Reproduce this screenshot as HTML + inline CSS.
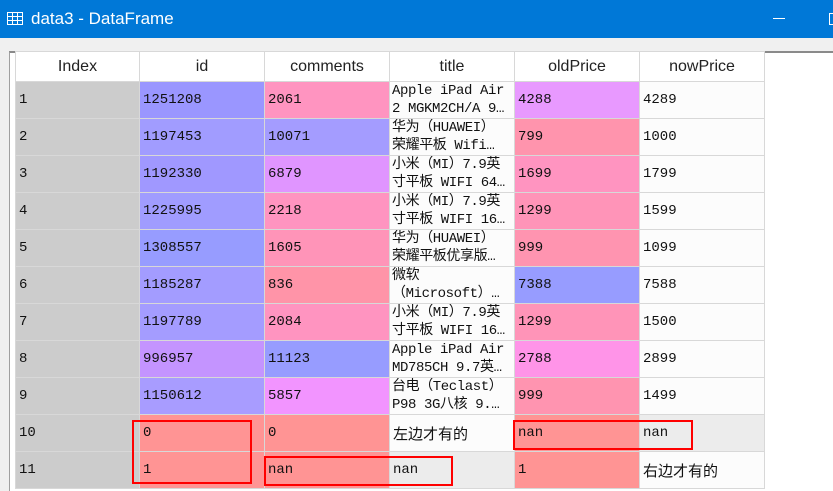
<!DOCTYPE html>
<html><head><meta charset="utf-8"><style>
body{margin:0;width:833px;height:489px;overflow:hidden;background:#f0f0f0;position:relative;font-family:"Liberation Sans","Noto Sans CJK SC",sans-serif}
.tb{position:absolute;left:0;top:0;width:833px;height:38px;background:#0078d7;color:#fff;font-size:17px}
.tb .t{position:absolute;left:31px;top:9px}
.wa{position:absolute;left:9px;top:51px;width:824px;height:438px;background:#fff;border-left:1px solid #a0a0a0;border-top:2px solid #8a8a8a}
.wb{position:absolute;left:15px;top:51px;width:1px;height:438px;background:#8a8a8a}
table{position:absolute;left:15px;top:51px;border-collapse:separate;border-spacing:1px;background:#d8d8d8;table-layout:fixed}
td,th{padding:0 0 0 3px;overflow:hidden;white-space:nowrap}
th{height:29px;background:#fff;font-weight:normal;font-size:16px;color:#222;text-align:center;padding:0}
td{height:36px;font-family:"Liberation Mono","Noto Sans CJK SC",monospace;font-size:14px;color:#111;background:#fcfcfc}
td.i{background:#cccccc}
td.t{line-height:18px;font-size:14px;letter-spacing:-0.4px;padding-left:2px}
td.s{font-family:"Liberation Sans","Noto Sans CJK SC",sans-serif;font-size:15px}
td.p{background:#ff9494}
td.g{background:#ececec}
td.w{background:#fcfcfc}
.r{position:absolute;border:2px solid #f00;box-sizing:border-box}
</style></head><body>
<div class="tb"><svg style="position:absolute;left:7px;top:12px" width="16" height="13"><rect x="0.5" y="0.5" width="15" height="12" fill="none" stroke="#fff"/><path d="M0 4.5H16M0 8.5H16M5.5 0V13M10.5 0V13" stroke="#fff"/></svg><span class="t">data3 - DataFrame</span>
<div style="position:absolute;left:773px;top:18px;width:12px;height:1px;background:#fff"></div>
<div style="position:absolute;left:829px;top:13px;width:8px;height:10px;border:1px solid #fff"></div></div>
<div class="wa"></div><div class="wb"></div>
<table>
<colgroup><col style="width:123px"><col style="width:124px"><col style="width:124px"><col style="width:124px"><col style="width:124px"><col style="width:124px"></colgroup>
<tr><th>Index</th><th>id</th><th>comments</th><th>title</th><th>oldPrice</th><th>nowPrice</th></tr>
<tr><td class="i">1</td><td style="background:#9a96ff">1251208</td><td style="background:#ff94c0">2061</td><td class="t">Apple iPad Air<br>2 MGKM2CH/A 9…</td><td style="background:#e899ff">4288</td><td>4289</td></tr>
<tr><td class="i">2</td><td style="background:#a19cff">1197453</td><td style="background:#a49cff">10071</td><td class="t">华为（HUAWEI）<br>荣耀平板 Wifi…</td><td style="background:#ff94ad">799</td><td>1000</td></tr>
<tr><td class="i">3</td><td style="background:#a098ff">1192330</td><td style="background:#e095ff">6879</td><td class="t">小米（MI）7.9英<br>寸平板 WIFI 64…</td><td style="background:#ff94c0">1699</td><td>1799</td></tr>
<tr><td class="i">4</td><td style="background:#a09cff">1225995</td><td style="background:#ff94c0">2218</td><td class="t">小米（MI）7.9英<br>寸平板 WIFI 16…</td><td style="background:#ff94b8">1299</td><td>1599</td></tr>
<tr><td class="i">5</td><td style="background:#979cff">1308557</td><td style="background:#ff94b8">1605</td><td class="t">华为（HUAWEI）<br>荣耀平板优享版…</td><td style="background:#ff94b0">999</td><td>1099</td></tr>
<tr><td class="i">6</td><td style="background:#a39cff">1185287</td><td style="background:#ff94a8">836</td><td class="t">微软<br>（Microsoft）…</td><td style="background:#979cff">7388</td><td>7588</td></tr>
<tr><td class="i">7</td><td style="background:#a49cff">1197789</td><td style="background:#ff94c0">2084</td><td class="t">小米（MI）7.9英<br>寸平板 WIFI 16…</td><td style="background:#ff94b8">1299</td><td>1500</td></tr>
<tr><td class="i">8</td><td style="background:#c494ff">996957</td><td style="background:#979cff">11123</td><td class="t">Apple iPad Air<br>MD785CH 9.7英…</td><td style="background:#ff94e8">2788</td><td>2899</td></tr>
<tr><td class="i">9</td><td style="background:#a89cff">1150612</td><td style="background:#f294ff">5857</td><td class="t">台电（Teclast）<br>P98 3G八核 9.…</td><td style="background:#ff94b0">999</td><td>1499</td></tr>
<tr><td class="i">10</td><td class="p">0</td><td class="p">0</td><td class="s w">左边才有的</td><td class="p">nan</td><td class="g">nan</td></tr>
<tr><td class="i">11</td><td class="p">1</td><td class="p">nan</td><td class="g">nan</td><td class="p">1</td><td class="s w">右边才有的</td></tr>
</table>
<div class="r" style="left:132px;top:420px;width:120px;height:64px"></div>
<div class="r" style="left:513px;top:420px;width:180px;height:30px"></div>
<div class="r" style="left:264px;top:456px;width:189px;height:30px"></div>
</body></html>
